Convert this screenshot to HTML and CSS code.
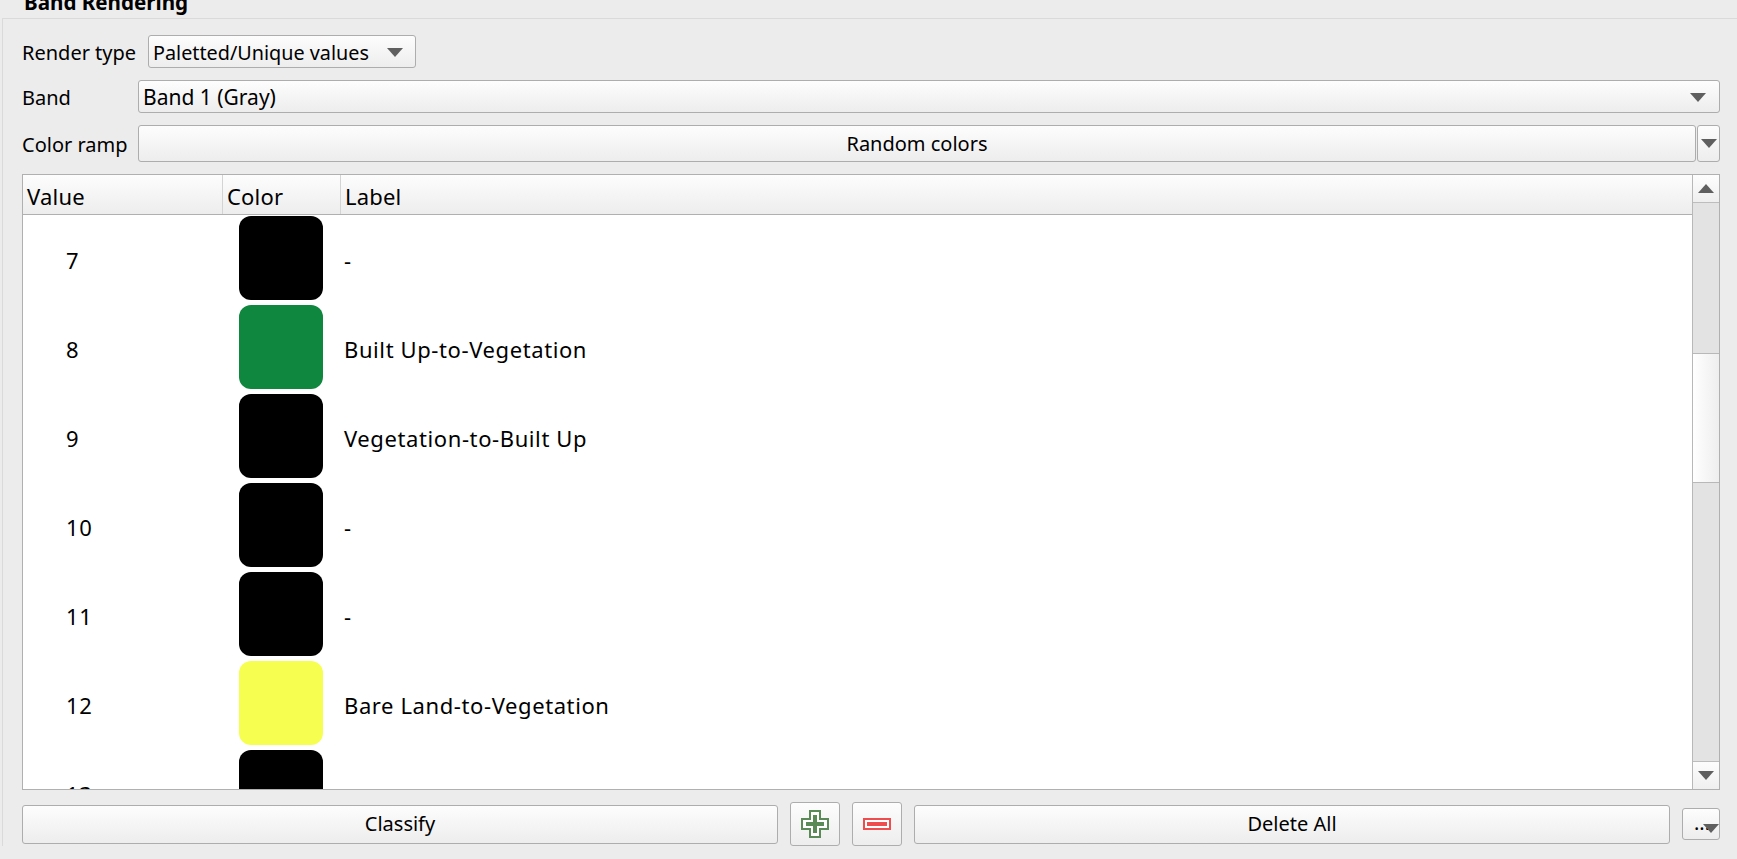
FILE: index.html
```html
<!DOCTYPE html>
<html lang="en">
<head>
<meta charset="UTF-8">
<link rel="stylesheet" href="styles.css">
</head>
<body>
<div class="title"><b>Band Rendering</b></div>
<div class="group">
  <div class="form-row">
    <span class="label label-render">Render type</span>
    <div class="btn combo combo-render">Paletted/Unique values<i class="arrow-down"></i></div>
  </div>
  <div class="form-row">
    <span class="label">Band</span>
    <div class="btn combo combo-band">Band 1 (Gray)<i class="arrow-down"></i></div>
  </div>
  <div class="form-row">
    <span class="label">Color ramp</span>
    <div class="btn ramp">Random colors</div>
    <div class="btn ramp-drop"><i class="arrow-down"></i></div>
  </div>

  <div class="table">
    <div class="table-main">
      <div class="table-head">
        <div class="th th-value">Value</div>
        <div class="th th-color">Color</div>
        <div class="th">Label</div>
      </div>
      <div class="table-body">
        <div class="row"><div class="val">7</div><div class="swatch black"></div><div class="lab">-</div></div>
        <div class="row"><div class="val">8</div><div class="swatch green"></div><div class="lab">Built Up-to-Vegetation</div></div>
        <div class="row"><div class="val">9</div><div class="swatch black"></div><div class="lab">Vegetation-to-Built Up</div></div>
        <div class="row"><div class="val">10</div><div class="swatch black"></div><div class="lab">-</div></div>
        <div class="row"><div class="val">11</div><div class="swatch black"></div><div class="lab">-</div></div>
        <div class="row"><div class="val">12</div><div class="swatch yellow"></div><div class="lab">Bare Land-to-Vegetation</div></div>
        <div class="row"><div class="val">13</div><div class="swatch black"></div></div>
      </div>
    </div>
    <div class="scrollbar">
      <div class="sb-btn sb-up"><i class="arrow-up"></i></div>
      <div class="sb-track"><div class="sb-thumb"></div></div>
      <div class="sb-btn sb-down"><i class="arrow-down"></i></div>
    </div>
  </div>

  <div class="actions">
    <div class="btn action">Classify</div>
    <div class="btn icon-btn">
      <svg width="28" height="28" viewBox="0 0 28 28">
        <path d="M9 1H19V9H27V19H19V27H9V19H1V9H9Z" fill="#fff" stroke="#5a8a55" stroke-width="2"/>
        <path d="M12 5H16V12H23V16H16V23H12V16H5V12H12Z" fill="#5a8a55"/>
      </svg>
    </div>
    <div class="btn icon-btn">
      <svg width="28" height="12" viewBox="0 0 28 12">
        <rect x="1" y="1" width="26" height="10" fill="#fff" stroke="#ef4d4d" stroke-width="2"/>
        <rect x="4" y="4" width="20" height="4" fill="#ef4d4d"/>
      </svg>
    </div>
    <div class="btn action">Delete All</div>
    <div class="btn menu-btn"><span class="dots">...</span><i class="arrow-down menu-arrow"></i></div>
  </div>
</div>
</body>
</html>
```

FILE: styles.css
```css
html, body {
  margin: 0;
  height: 100%;
  overflow: hidden;
}

body {
  background-color: #ececec;
  color: #000;
  font-family: "Noto Sans", sans-serif;
  font-size: 20px;
}

.title {
  height: 18px;
  padding-left: 24px;
  font-size: 20.6px;
  line-height: 4px;
  overflow: hidden;
}

.group {
  margin-left: 2px;
  padding: 16px 17px 0 19px;
  border-top: 1px solid #dadada;
  border-left: 1px solid #dadada;
}

.btn {
  box-sizing: border-box;
  border: 1px solid #adadad;
  border-radius: 3px;
  background: linear-gradient(#fdfdfd, #ededed);
}

.form-row {
  display: flex;
  align-items: center;
  margin-bottom: 12px;
}

.label {
  width: 116px;
  flex: none;
  padding-top: 1px;
}

.label-render {
  width: 126px;
}

.combo {
  display: flex;
  align-items: center;
  justify-content: space-between;
  height: 33px;
  padding: 1px 13px 0 4px;
}

.combo-render {
  width: 268px;
  font-size: 19.8px;
  padding-right: 12px;
}

.combo-band {
  flex: 1;
  font-size: 21px;
}

.ramp {
  flex: 1;
  height: 37px;
  line-height: 36px;
  text-align: center;
}

.ramp-drop {
  display: flex;
  align-items: center;
  justify-content: center;
  width: 23px;
  height: 37px;
  margin-left: 1px;
}

.arrow-down, .arrow-up {
  display: block;
  width: 0;
  height: 0;
  border-left: 8px solid transparent;
  border-right: 8px solid transparent;
}

.arrow-down {
  border-top: 9px solid #5f5f5f;
}

.arrow-up {
  border-bottom: 9px solid #5f5f5f;
}

.table {
  display: flex;
  height: 616px;
  box-sizing: border-box;
  border: 1px solid #b0b0b0;
  background-color: #fff;
}

.table-main {
  flex: 1;
  min-width: 0;
  display: flex;
  flex-direction: column;
  font-size: 22px;
  letter-spacing: 0.6px;
}

.table-head {
  display: flex;
  flex: none;
  height: 39px;
  border-bottom: 1px solid #b0b0b0;
  background: linear-gradient(#fdfdfd, #ededed);
}

.th {
  padding-left: 4px;
  line-height: 42px;
  letter-spacing: 0.2px;
}

.th-value {
  width: 195px;
  border-right: 1px solid #d4d4d4;
}

.th-color {
  width: 113px;
  border-right: 1px solid #d4d4d4;
}

.table-body {
  flex: 1;
  overflow: hidden;
  padding-top: 1px;
}

.row {
  display: flex;
  height: 89px;
}

.val {
  width: 173px;
  padding-left: 43px;
  flex: none;
  line-height: 89px;
}

.swatch {
  width: 84px;
  height: 84px;
  flex: none;
  border-radius: 12px;
}

.black { background-color: #000; }
.green { background-color: #10873e; }
.yellow { background-color: #f6ff50; }

.lab {
  padding-left: 21px;
  line-height: 89px;
}

.scrollbar {
  display: flex;
  flex-direction: column;
  flex: none;
  width: 26px;
  border-left: 1px solid #b8b8b8;
  background-color: #e3e3e3;
}

.sb-btn {
  display: flex;
  align-items: center;
  justify-content: center;
  flex: none;
  height: 27px;
  background: linear-gradient(#fdfdfd, #efefef);
}

.sb-up {
  border-bottom: 1px solid #bdbdbd;
}

.sb-down {
  border-top: 1px solid #bdbdbd;
}

.sb-track {
  flex: 1;
  padding-top: 150px;
}

.sb-thumb {
  box-sizing: border-box;
  height: 130px;
  border-top: 1px solid #b8b8b8;
  border-bottom: 1px solid #b8b8b8;
  background: linear-gradient(to right, #fff, #eeeeee);
}

.actions {
  display: flex;
  align-items: center;
  gap: 12px;
  height: 44px;
  margin-top: 12px;
}

.action {
  flex: 1;
  height: 39px;
  line-height: 36px;
  text-align: center;
}

.icon-btn {
  display: flex;
  align-items: center;
  justify-content: center;
  flex: none;
  width: 50px;
  height: 44px;
}

.menu-btn {
  position: relative;
  flex: none;
  width: 38px;
  height: 32px;
}

.dots {
  position: absolute;
  left: 11px;
  top: 2px;
  line-height: 24px;
}

.menu-arrow {
  position: absolute;
  left: 20px;
  top: 15px;
}
```
